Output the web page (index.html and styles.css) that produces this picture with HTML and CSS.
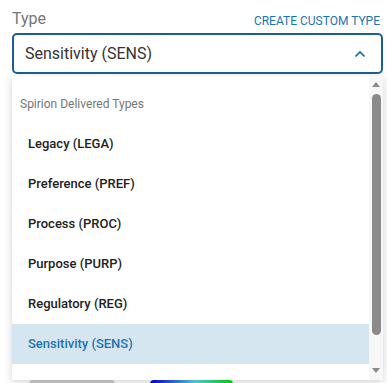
FILE: index.html
```html
<!DOCTYPE html>
<html lang="en">
<head>
    <meta charset="UTF-8">
    <meta name="viewport" content="width=device-width, initial-scale=1.0">
    <title>Type</title>
    <link rel="stylesheet" href="styles.css">
</head>
<body>
    <div class="field">
        <div class="field-head">
            <span class="field-label">Type</span>
            <a class="field-link" href="#">CREATE CUSTOM TYPE</a>
        </div>
        <div class="select">
            <span class="select-value">Sensitivity (SENS)</span>
            <svg class="chevron" width="12" height="8" viewBox="0 0 12 8">
                <path d="M1.5 6.5 L6 2 L10.5 6.5" fill="none" stroke="#1a6aa8" stroke-width="1.6"/>
            </svg>
        </div>
    </div>

    <div class="under">
        <div class="under-gray"></div>
        <div class="under-gradient"></div>
    </div>

    <div class="menu">
        <ul class="menu-list">
            <li class="menu-group">Spirion Delivered Types</li>
            <li class="menu-item">Legacy (LEGA)</li>
            <li class="menu-item">Preference (PREF)</li>
            <li class="menu-item">Process (PROC)</li>
            <li class="menu-item">Purpose (PURP)</li>
            <li class="menu-item">Regulatory (REG)</li>
            <li class="menu-item selected">Sensitivity (SENS)</li>
        </ul>
        <div class="scrollbar">
            <div class="arrow up"></div>
            <div class="thumb"></div>
            <div class="arrow down"></div>
        </div>
    </div>
</body>
</html>
```

FILE: styles.css
```css
body {
    font-family: Roboto, 'Liberation Sans', sans-serif;
    background-color: white;
    color: #333;
    margin: 0;
    padding: 0;
    position: relative;
    height: 383px;
    overflow: hidden;
}
.field {
    padding: 6px 4px 0 12px;
}
.field-head {
    display: flex;
    justify-content: space-between;
    align-items: center;
    height: 24px;
    margin-bottom: 3px;
}
.field-label {
    font-size: 16px;
    color: #767676;
}
.field-link {
    font-size: 12px;
    font-weight: 400;
    color: #1b74b6;
    text-decoration: none;
    margin-top: 5px;
    margin-right: 3px;
}
.select {
    display: flex;
    align-items: center;
    justify-content: space-between;
    height: 37px;
    border: 2px solid #1a5f9b;
    border-radius: 5px;
    padding: 0 15px 0 11px;
}
.select-value {
    font-size: 16px;
    color: #333;
}
.under {
    display: flex;
    gap: 35px;
    margin: 306px 0 0 29px;
}
.under-gray {
    width: 86px;
    height: 8px;
    background-color: #cfcfcf;
    border-radius: 4px;
}
.under-gradient {
    width: 83px;
    height: 8px;
    background: linear-gradient(to right, #0000d8, #5ad8e8 55%, #00e000);
    border-radius: 4px;
}
.menu {
    position: absolute;
    top: 76px;
    left: 12px;
    width: 371px;
    height: 304px;
    background-color: white;
    box-shadow: 0 2px 8px rgba(0, 0, 0, 0.18);
    display: flex;
}
.menu-list {
    list-style: none;
    margin: 0;
    padding: 8px 0 0 0;
    flex: 1;
}
.menu-group {
    font-size: 12px;
    color: #767676;
    height: 40px;
    line-height: 40px;
    padding-left: 8px;
}
.menu-item {
    font-size: 13px;
    font-weight: 500;
    color: #222;
    height: 40px;
    line-height: 40px;
    padding-left: 16px;
}
.menu-item.selected {
    background-color: #d6e6f0;
    color: #1b74b6;
}
.scrollbar {
    width: 14px;
    background-color: #f7f7f7;
    display: flex;
    flex-direction: column;
    align-items: center;
    padding-top: 6px;
}
.arrow {
    width: 0;
    height: 0;
    border-left: 4px solid transparent;
    border-right: 4px solid transparent;
}
.arrow.up {
    border-bottom: 5px solid #8a8a8a;
}
.arrow.down {
    border-top: 5px solid #8a8a8a;
    margin-top: 33px;
}
.thumb {
    width: 9px;
    height: 241px;
    margin-top: 7px;
    background-color: #8a8a8a;
    border-radius: 5px;
}
```
